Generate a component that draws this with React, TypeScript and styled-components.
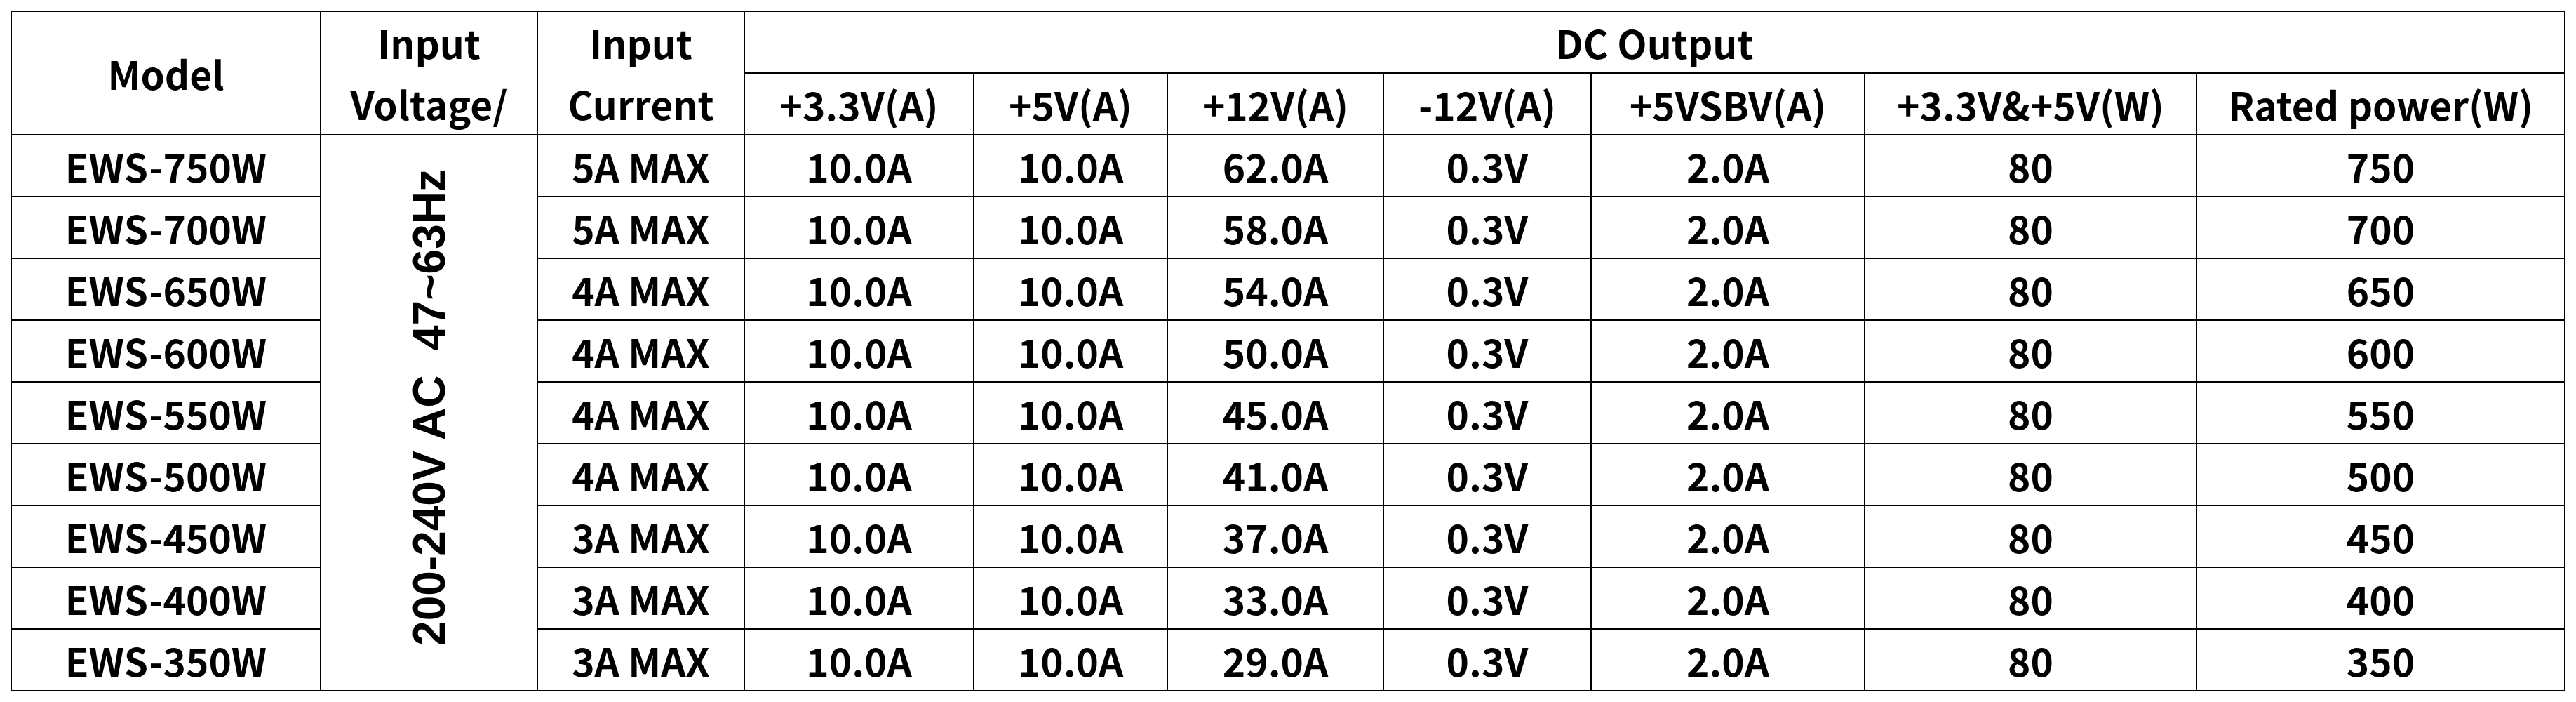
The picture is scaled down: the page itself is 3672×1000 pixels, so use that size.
import React from 'react';
import styled, { createGlobalStyle } from 'styled-components';

interface ModelRow {
  model: string;
  current: string;
  v33: string;
  v5: string;
  v12: string;
  vNeg12: string;
  vsb: string;
  combined: string;
  rated: string;
}

const rows: ModelRow[] = [
  { model: 'EWS-750W', current: '5A MAX', v33: '10.0A', v5: '10.0A', v12: '62.0A', vNeg12: '0.3V', vsb: '2.0A', combined: '80', rated: '750' },
  { model: 'EWS-700W', current: '5A MAX', v33: '10.0A', v5: '10.0A', v12: '58.0A', vNeg12: '0.3V', vsb: '2.0A', combined: '80', rated: '700' },
  { model: 'EWS-650W', current: '4A MAX', v33: '10.0A', v5: '10.0A', v12: '54.0A', vNeg12: '0.3V', vsb: '2.0A', combined: '80', rated: '650' },
  { model: 'EWS-600W', current: '4A MAX', v33: '10.0A', v5: '10.0A', v12: '50.0A', vNeg12: '0.3V', vsb: '2.0A', combined: '80', rated: '600' },
  { model: 'EWS-550W', current: '4A MAX', v33: '10.0A', v5: '10.0A', v12: '45.0A', vNeg12: '0.3V', vsb: '2.0A', combined: '80', rated: '550' },
  { model: 'EWS-500W', current: '4A MAX', v33: '10.0A', v5: '10.0A', v12: '41.0A', vNeg12: '0.3V', vsb: '2.0A', combined: '80', rated: '500' },
  { model: 'EWS-450W', current: '3A MAX', v33: '10.0A', v5: '10.0A', v12: '37.0A', vNeg12: '0.3V', vsb: '2.0A', combined: '80', rated: '450' },
  { model: 'EWS-400W', current: '3A MAX', v33: '10.0A', v5: '10.0A', v12: '33.0A', vNeg12: '0.3V', vsb: '2.0A', combined: '80', rated: '400' },
  { model: 'EWS-350W', current: '3A MAX', v33: '10.0A', v5: '10.0A', v12: '29.0A', vNeg12: '0.3V', vsb: '2.0A', combined: '80', rated: '350' },
];

const columnWidths = [441, 309, 295, 327, 276, 308, 296, 390, 473, 525];

const outputHeaders = ['+3.3V(A)', '+5V(A)', '+12V(A)', '-12V(A)', '+5VSBV(A)', '+3.3V&+5V(W)', 'Rated power(W)'];

const GlobalStyle = createGlobalStyle`
  html, body {
    margin: 0;
    padding: 0;
    background: #ffffff;
  }
  body {
    font-family: "Noto Sans CJK SC", "Noto Sans", sans-serif;
    color: #000;
  }
`;

const Page = styled.div`
  padding: 15px 0 0 15px;
`;

const SpecTable = styled.table`
  border-collapse: collapse;
  table-layout: fixed;
  width: 3640px;
  font-family: "Noto Sans CJK SC", "Noto Sans", sans-serif;
  font-weight: 700;
  font-size: 55px;
  color: #000;
  background: #fff;
`;

const HeadCell = styled.th<{ $stacked?: boolean }>`
  border: 2px solid #000;
  height: 86px;
  padding: 0;
  text-align: center;
  vertical-align: middle;
  font-weight: 700;
  white-space: nowrap;
  line-height: ${({ $stacked }) => ($stacked ? '87px' : '1.2')};
`;

const Cell = styled.td`
  border: 2px solid #000;
  height: 86px;
  padding: 0;
  text-align: center;
  vertical-align: middle;
  line-height: 1.2;
  white-space: nowrap;
`;

const VoltageCell = styled.td`
  border: 2px solid #000;
  padding: 0;
  text-align: center;
  vertical-align: middle;
`;

const VerticalLabel = styled.span`
  display: inline-block;
  writing-mode: vertical-rl;
  transform: rotate(180deg);
  font-family: "Liberation Sans", Arial, sans-serif;
  font-weight: 700;
  font-size: 64px;
  line-height: 1;
  white-space: pre;
`;

const App: React.FC = () => {
  return (
    <>
      <GlobalStyle />
      <Page>
        <SpecTable>
          <colgroup>
            {columnWidths.map((w, i) => (
              <col key={i} style={{ width: w }} />
            ))}
          </colgroup>
          <thead>
            <tr>
              <HeadCell rowSpan={2}>Model</HeadCell>
              <HeadCell rowSpan={2} $stacked>
                Input
                <br />
                Voltage/
              </HeadCell>
              <HeadCell rowSpan={2} $stacked>
                Input
                <br />
                Current
              </HeadCell>
              <HeadCell colSpan={7}>DC Output</HeadCell>
            </tr>
            <tr>
              {outputHeaders.map(h => (
                <HeadCell key={h}>{h}</HeadCell>
              ))}
            </tr>
          </thead>
          <tbody>
            {rows.map((row, i) => (
              <tr key={row.model}>
                <Cell>{row.model}</Cell>
                {i === 0 && (
                  <VoltageCell rowSpan={rows.length}>
                    <VerticalLabel>{'200-240V AC  47~63Hz'}</VerticalLabel>
                  </VoltageCell>
                )}
                <Cell>{row.current}</Cell>
                <Cell>{row.v33}</Cell>
                <Cell>{row.v5}</Cell>
                <Cell>{row.v12}</Cell>
                <Cell>{row.vNeg12}</Cell>
                <Cell>{row.vsb}</Cell>
                <Cell>{row.combined}</Cell>
                <Cell>{row.rated}</Cell>
              </tr>
            ))}
          </tbody>
        </SpecTable>
      </Page>
    </>
  );
};

export default App;
